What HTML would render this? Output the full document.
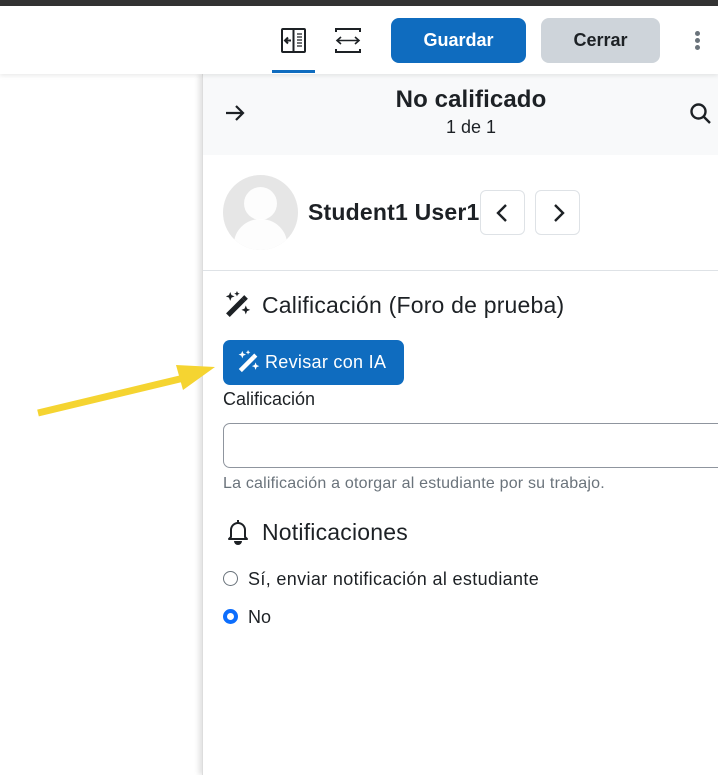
<!DOCTYPE html>
<html><head><meta charset="utf-8">
<style>
*{margin:0;padding:0;box-sizing:border-box}
body{width:718px;height:775px;overflow:hidden;background:#fff;font-family:"Liberation Sans",sans-serif;color:#1d2125;position:relative}
.abs{position:absolute}
.topbar{left:0;top:0;width:718px;height:6px;background:#333}
.hdr{left:0;top:6px;width:718px;height:68px;background:#fff;box-shadow:0 2px 4px rgba(0,0,0,.08);z-index:2}
.btn{position:absolute;border-radius:8px;font-weight:bold;font-size:18px;display:flex;align-items:center;justify-content:center}
.panel{left:202px;top:74px;width:516px;height:701px;background:#fff;border-left:1px solid #ddd;box-shadow:-3px 0 5px rgba(0,0,0,.12)}
.ph{left:0;top:0;width:516px;height:81px;background:#f8f9fa}
</style></head><body>
<div class="abs topbar"></div>
<div class="abs hdr">
  <svg class="abs" style="left:281px;top:22px" width="25" height="25" viewBox="0 0 25 25" fill="none" stroke="#1d2125" stroke-width="2"><rect x="1" y="1" width="23" height="23" rx="1"/><line x1="12.5" y1="1" x2="12.5" y2="24"/><path d="M10 12.5H4M7 9.5l-3 3 3 3"/><path d="M16 6h5M16 9h5M16 12h5M16 15h5M16 18h5" stroke-width="1.3"/></svg>
  <div class="abs" style="left:272px;top:64px;width:43px;height:3px;background:#0f6cbf"></div>
  <svg class="abs" style="left:335px;top:22px" width="26" height="25" viewBox="0 0 26 25" fill="none" stroke="#1d2125" stroke-width="2"><path d="M1 4V1h24v3M1 21v3h24v-3"/><path d="M2 12.5h22M6 9l-4 3.5 4 3.5M20 9l4 3.5-4 3.5" stroke-width="1.6"/></svg>
  <div class="btn" style="left:391px;top:12px;width:135px;height:45px;background:#0f6cbf;color:#fff">Guardar</div>
  <div class="btn" style="left:541px;top:12px;width:119px;height:45px;background:#ced4da;color:#1d2125">Cerrar</div>
  <div class="abs" style="left:695px;top:25px;width:5px">
    <div style="width:5px;height:5px;border-radius:50%;background:#6a737b;margin-bottom:2px"></div>
    <div style="width:5px;height:5px;border-radius:50%;background:#6a737b;margin-bottom:2px"></div>
    <div style="width:5px;height:5px;border-radius:50%;background:#6a737b"></div>
  </div>
</div>
<div class="abs panel">
  <div class="abs ph">
    <svg class="abs" style="left:22px;top:30px" width="20" height="18" viewBox="0 0 20 18" fill="none" stroke="#1d2125" stroke-width="2.2"><path d="M1 9h17M11 2l7 7-7 7"/></svg>
    <div class="abs" style="left:0;top:12px;width:536px;text-align:center;font-weight:bold;font-size:24px;letter-spacing:.1px">No calificado</div>
    <div class="abs" style="left:0;top:43px;width:536px;text-align:center;font-size:18px">1 de 1</div>
    <svg class="abs" style="left:487px;top:29px" width="22" height="22" viewBox="0 0 22 22" fill="none" stroke="#1d2125" stroke-width="2.4"><circle cx="8.5" cy="8.5" r="7"/><path d="M13.5 13.5L20 20"/></svg>
  </div>
  <div class="abs" style="left:20px;top:101px;width:75px;height:75px;border-radius:50%;background:#e6e6e6;overflow:hidden">
    <div class="abs" style="left:21px;top:12px;width:33px;height:33px;border-radius:50%;background:#fff;opacity:.9"></div>
    <div class="abs" style="left:11px;top:44px;width:53px;height:50px;border-radius:50%;background:#fff;opacity:.9"></div>
  </div>
  <div class="abs" style="left:105px;top:125px;font-weight:bold;font-size:23px;letter-spacing:.2px">Student1 User1</div>
  <div class="abs" style="left:277px;top:116px;width:45px;height:45px;border:1px solid #dee2e6;border-radius:6px;background:#fff"><svg style="margin:12px 0 0 14px" width="14" height="20" viewBox="0 0 14 20" fill="none" stroke="#1d2125" stroke-width="2.4"><path d="M11 2L3 10l8 8"/></svg></div>
  <div class="abs" style="left:332px;top:116px;width:45px;height:45px;border:1px solid #dee2e6;border-radius:6px;background:#fff"><svg style="margin:12px 0 0 16px" width="14" height="20" viewBox="0 0 14 20" fill="none" stroke="#1d2125" stroke-width="2.4"><path d="M3 2l8 8-8 8"/></svg></div>
  <div class="abs" style="left:0;top:196px;width:516px;height:1px;background:#dee2e6"></div>
  <svg class="abs" style="left:21px;top:217px" width="27" height="27" viewBox="0 0 26 26" fill="#1d2125"><path d="M2 21.5l15-15 3.5 3.5-15 15z"/><path d="M17 6.5l2.5-2.5 3.5 3.5-2.5 2.5z"/><path d="M6 1l1.2 3 3 1.2-3 1.2L6 9.5 4.8 6.4 1.8 5.2l3-1.2z"/><path d="M12.5 0l.8 1.8 1.8.8-1.8.8-.8 1.8-.8-1.8-1.8-.8 1.8-.8z"/><path d="M21 14l1.2 3 3 1.2-3 1.2L21 22.5l-1.2-3.1-3-1.2 3-1.2z"/></svg>
  <div class="abs" style="left:59px;top:218px;font-size:23px;letter-spacing:.2px">Calificación (Foro de prueba)</div>
  <div class="abs" style="left:20px;top:266px;width:181px;height:45px;background:#0f6cbf;border-radius:7px;color:#fff;font-size:18px">
    <svg class="abs" style="left:14px;top:10px" width="23" height="23" viewBox="0 0 26 26" fill="#fff"><path d="M2 21.5l15-15 3.5 3.5-15 15z"/><path d="M17 6.5l2.5-2.5 3.5 3.5-2.5 2.5z"/><path d="M6 1l1.2 3 3 1.2-3 1.2L6 9.5 4.8 6.4 1.8 5.2l3-1.2z"/><path d="M12.5 0l.8 1.8 1.8.8-1.8.8-.8 1.8-.8-1.8-1.8-.8 1.8-.8z"/><path d="M21 14l1.2 3 3 1.2-3 1.2L21 22.5l-1.2-3.1-3-1.2 3-1.2z"/></svg>
    <div class="abs" style="left:42px;top:12px;letter-spacing:.3px">Revisar con IA</div>
  </div>
  <div class="abs" style="left:20px;top:315px;font-size:18px">Calificación</div>
  <div class="abs" style="left:20px;top:349px;width:510px;height:45px;border:1px solid #8f959e;border-radius:7px"></div>
  <div class="abs" style="left:20px;top:401px;font-size:16px;letter-spacing:.2px;color:#6a737b">La calificación a otorgar al estudiante por su trabajo.</div>
  <svg class="abs" style="left:24px;top:445px" width="22" height="26" viewBox="0 0 22 26" fill="none" stroke="#1d2125" stroke-width="2"><path d="M4 18V11a7 7 0 0 1 14 0v7l2 2H2z" stroke-linejoin="round"/><path d="M11 1v3"/><path d="M8 22a3 3 0 0 0 6 0" fill="#1d2125"/></svg>
  <div class="abs" style="left:59px;top:445px;font-size:23px;letter-spacing:.2px">Notificaciones</div>
  <div class="abs" style="left:20px;top:497px;width:15px;height:15px;border:1px solid #6a737b;border-radius:50%"></div>
  <div class="abs" style="left:45px;top:495px;font-size:18px;letter-spacing:.35px">Sí, enviar notificación al estudiante</div>
  <div class="abs" style="left:20px;top:535px;width:15px;height:15px;border-radius:50%;background:#0d6efd;border:2px solid #0d6efd"><div style="width:7px;height:7px;margin:2px;border-radius:50%;background:#fff"></div></div>
  <div class="abs" style="left:45px;top:533px;font-size:18px">No</div>
</div>
<svg class="abs" style="left:0;top:0;z-index:5" width="718" height="775"><path d="M38 413L184 378" stroke="#f5d431" stroke-width="7"/><path d="M215 367L176 365L183 390Z" fill="#f5d431"/></svg>
</body></html>
